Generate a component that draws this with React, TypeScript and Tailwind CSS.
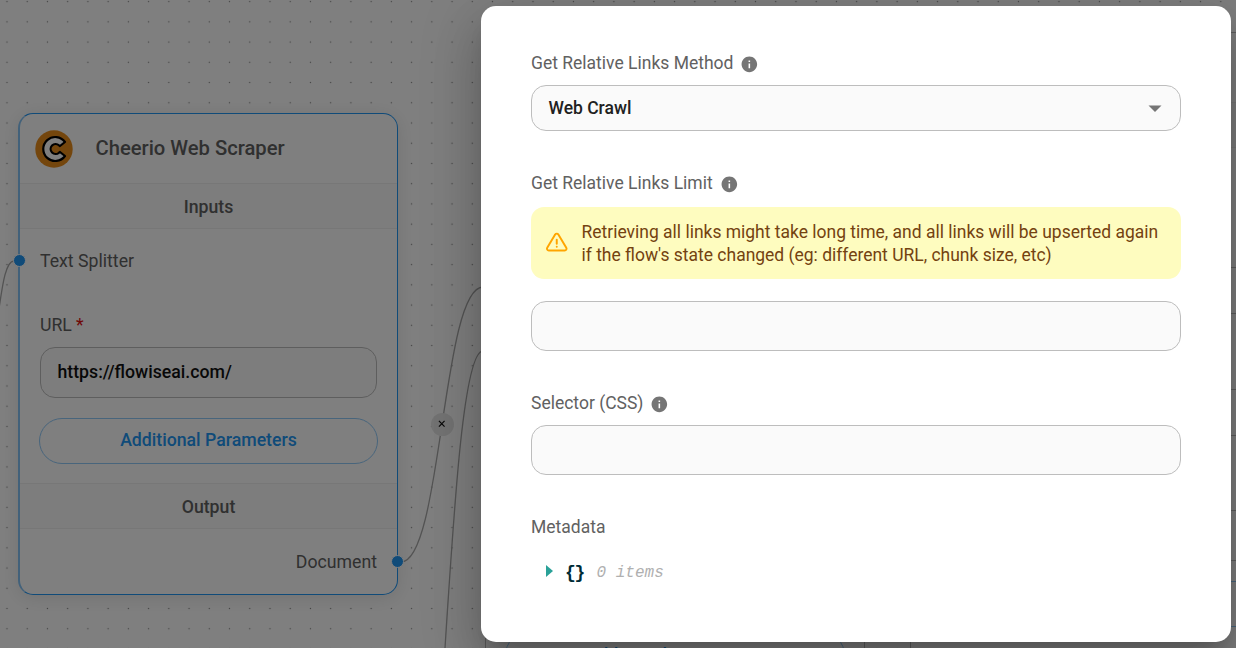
import type { ReactNode } from 'react';

function InfoIcon() {
  return (
    <svg viewBox="0 0 24 24" className="mt-[2px] h-[18.7px] w-[18.7px] shrink-0 fill-[#757575]">
      <path d="M12 2C6.48 2 2 6.48 2 12s4.48 10 10 10 10-4.48 10-10S17.52 2 12 2zm1 15h-2v-6h2v6zm0-8h-2V7h2v2z" />
    </svg>
  );
}

function CheerioLogo() {
  return (
    <svg viewBox="-19 -19 38 38" className="h-[38px] w-[38px] shrink-0">
      <circle r="18.7" fill="#e88c1b" />
      <path
        d="M 10.4 -7 A 12 12 0 1 0 10.4 7 L 5.4 3 L 4.4 3.7 A 5 5 0 1 1 4.4 -3.7 L 5.4 -3 Z"
        transform="translate(0.6 0)"
        fill="#fff"
        stroke="#000"
        strokeWidth="2.2"
        strokeLinejoin="round"
      />
    </svg>
  );
}

function Label({ children, info, className = '' }: { children: ReactNode; info?: boolean; className?: string }) {
  return (
    <div className={`flex h-[26px] items-center text-[17.5px] text-[#616161] ${className}`}>
      <span>{children}</span>
      {info && <span className="ml-[7px]"><InfoIcon /></span>}
    </div>
  );
}

function Band({ children }: { children: ReactNode }) {
  return (
    <div className="flex h-[46px] shrink-0 items-center justify-center border-y border-[#eeeeee] bg-[#fafafa] pt-[2px] text-[17.7px] font-medium text-[#616161]">
      {children}
    </div>
  );
}

function PillButton({ className = '' }: { className?: string }) {
  return (
    <div className={`mx-[19px] flex h-[46px] shrink-0 items-center justify-center rounded-full border border-[#90caf9] text-[17.7px] font-medium text-[#2196f3] ${className}`}>
      Additional Parameters
    </div>
  );
}

function Field({ className = '', children }: { className?: string; children?: ReactNode }) {
  return (
    <div className={`flex items-center rounded-[15px] border border-[#bdbdbd] bg-[#fafafa] px-[17px] ${className}`}>
      {children}
    </div>
  );
}

const grayNode = 'absolute flex w-[380px] flex-col rounded-[15px] border border-[#bdbdbd] bg-white';

function Canvas() {
  return (
    <div className="absolute inset-0 overflow-hidden bg-white">
      <svg className="absolute inset-0 h-full w-full">
        <defs>
          <pattern id="dots" x="-3.1" y="-8.5" width="20.23" height="20.23" patternUnits="userSpaceOnUse">
            <circle cx="10.1" cy="10.1" r="0.7" fill="#888" />
          </pattern>
        </defs>
        <rect width="100%" height="100%" fill="url(#dots)" />
        <g fill="none" stroke="#a8a8a8" strokeWidth="1.3">
          <path d="M -15 350 C 1 350 -2 261 14 261" />
          <path d="M 401 562 C 442 562 442 287 483 287" />
          <path d="M 407 945 C 445 945 445 351 483 351" />
        </g>
      </svg>
      <div className="absolute top-[412.5px] left-[430.5px] flex h-[23px] w-[23px] items-center justify-center rounded-full bg-[#e6e6e6]">
        <svg viewBox="0 0 8 8" className="h-[7.5px] w-[7.5px]" stroke="#111" strokeWidth="1.3">
          <path d="M1 1 L7 7 M7 1 L1 7" />
        </svg>
      </div>

      <div className="absolute top-[113px] left-[18px] flex h-[482px] w-[380px] flex-col rounded-[15px] border border-l-2 border-[#2196f3] border-l-[#85c3f5] bg-white shadow-[0_3px_18px_rgba(32,40,45,0.12)]">
        <div className="flex h-[69px] shrink-0 items-center pl-[15px]">
          <CheerioLogo />
          <span className="ml-[22.5px] text-[20.2px] font-medium text-[#616161]">Cheerio Web Scraper</span>
        </div>
        <Band>Inputs</Band>
        <div className="mt-[19px] flex h-[26px] items-center pl-[20px] text-[17.7px] text-[#616161]">Text Splitter</div>
        <div className="mt-[38px] flex h-[26px] items-center gap-1 pl-[20px] text-[17.7px] text-[#616161]">
          URL <span className="text-[#e01010]">*</span>
        </div>
        <Field className="mx-5 mt-[9px] h-[51px] shrink-0">
          <span className="-ml-[0.5px] text-[17.7px] font-medium text-[#111]">https://flowiseai.com/</span>
        </Field>
        <PillButton className="mt-5 pb-[2px]" />
        <div className="mt-[19px]"><Band>Output</Band></div>
        <div className="mt-5 flex h-[26px] items-center justify-end pr-5 text-[17.7px] text-[#616161]">Document</div>
        <div className="absolute top-[140px] -left-[7px] h-[13px] w-[13px] rounded-full border border-white bg-[#2196f3]" />
        <div className="absolute top-[441px] -right-[7px] h-[13px] w-[13px] rounded-full border border-white bg-[#2196f3]" />
      </div>

      <div className={`${grayNode} top-[150px] left-[485px] h-[560px] justify-end pb-[31px]`}>
        <PillButton />
      </div>

      <div className={`${grayNode} top-[32px] left-[910px] h-[640px]`}>
        <div className="h-[69px] shrink-0" />
        <Band>Inputs</Band>
        <div className="-mx-px mt-[119px] h-[47px] shrink-0 border-y border-[#bdbdbd]" />
        <div className="-mx-px mt-[75px] h-[47px] shrink-0 border-y border-[#bdbdbd]" />
        <div className="-mx-px mt-[74px] h-[51px] shrink-0 border-y border-[#bdbdbd]" />
        <div className="-mx-px mt-[20px] h-[46px] shrink-0 border-y border-[#90caf9]" />
      </div>
    </div>
  );
}

export default function App() {
  return (
    <div className="relative h-[648px] w-full overflow-hidden font-['Roboto',sans-serif]">
      <Canvas />
      <div className="absolute inset-0 bg-black/50" />
      <div className="absolute top-[6px] left-[481px] flex h-[636px] w-[750px] flex-col rounded-[15px] bg-white px-[50px] pt-[44px] shadow-[0_14px_19px_-9px_rgba(0,0,0,0.2),0_30px_48px_4px_rgba(0,0,0,0.14),0_11px_58px_10px_rgba(0,0,0,0.12)]">
        <Label info>Get Relative Links Method</Label>
        <Field className="mt-[9px] h-[46px] justify-between">
          <span className="-ml-[0.5px] text-[17.5px] font-medium text-[#212121]">Web Crawl</span>
          <svg viewBox="0 0 14 7" className="mr-[1px] h-[7px] w-[14px] fill-[#757575]"><path d="M0.5 0.5h13L7 7z" /></svg>
        </Field>

        <Label info className="mt-[39px]">Get Relative Links Limit</Label>
        <div className="mt-[11px] flex h-[72px] items-center rounded-[13px] bg-[#fefcbf] pl-[14px] text-[17.48px] leading-[23px] text-[#744210]">
          <svg viewBox="0 0 24 24" className="mt-[-1px] h-[23.5px] w-[23.5px] shrink-0" fill="none" stroke="orange" strokeWidth="2" strokeLinecap="round" strokeLinejoin="round">
            <path d="M12 9v4" />
            <path d="M10.363 3.591l-8.106 13.534a1.914 1.914 0 0 0 1.636 2.871h16.214a1.914 1.914 0 0 0 1.636-2.87l-8.106-13.536a1.914 1.914 0 0 0-3.274 0z" />
            <path d="M12 16h.01" />
          </svg>
          <p className="mt-[2px] ml-[13px] whitespace-nowrap">
            Retrieving all links might take long time, and all links will be upserted again
            <br />
            if the flow's state changed (eg: different URL, chunk size, etc)
          </p>
        </div>
        <Field className="mt-[22px] h-[50px]" />

        <Label info className="mt-[39px]">Selector (CSS)</Label>
        <Field className="mt-[9px] h-[50px]" />

        <Label className="mt-[39px]">Metadata</Label>
        <div className="mt-[20px] flex h-[24px] items-center pl-[15px] font-['Liberation_Mono',monospace] text-[16px]">
          <svg viewBox="0 0 7 12" className="mt-[-3px] h-[12px] w-[7px] fill-[#2aa198]"><path d="M0 0l7 6-7 6z" /></svg>
          <span className="mt-[2px] ml-[12px] text-[18px] leading-[24px] font-bold tracking-[-1.3px] text-[#002b36]">{'{}'}</span>
          <span className="mt-[2px] ml-[12.5px] text-[#b0b0b0] italic">0 items</span>
        </div>
      </div>
    </div>
  );
}
